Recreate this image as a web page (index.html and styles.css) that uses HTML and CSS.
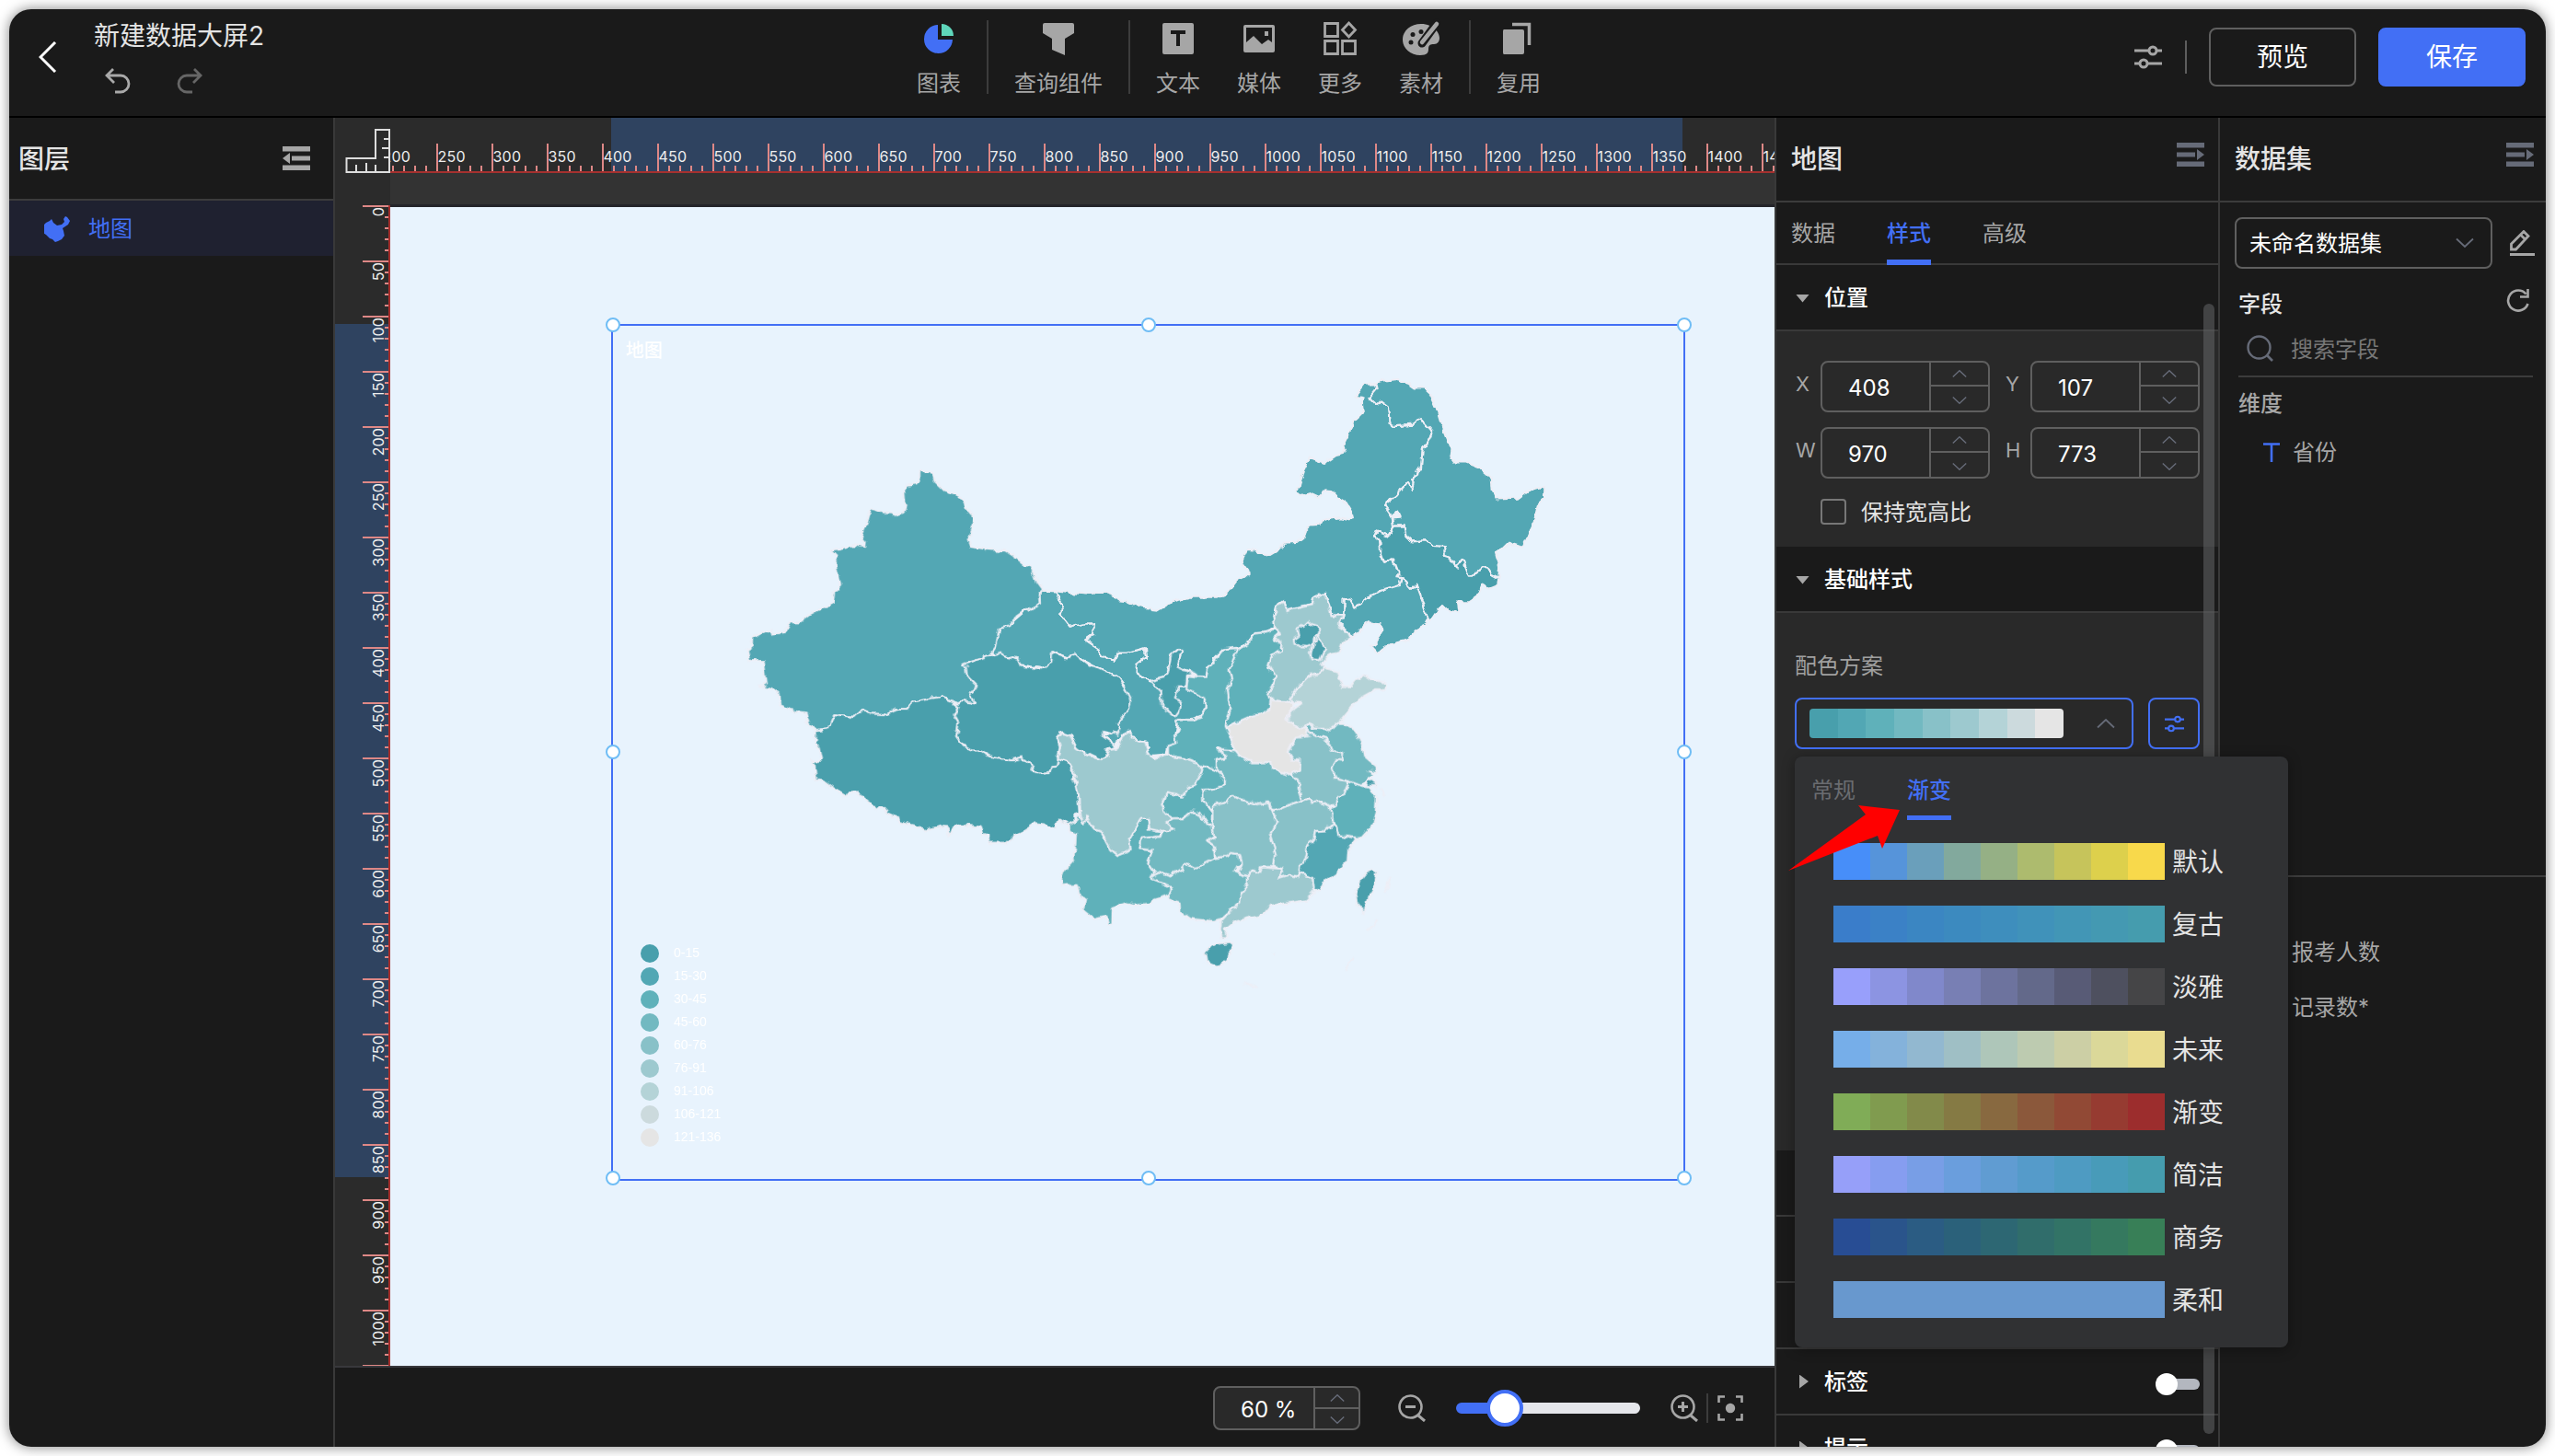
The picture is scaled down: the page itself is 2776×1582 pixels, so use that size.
FILE: index.html
```html
<!DOCTYPE html>
<html lang="zh-CN">
<head>
<meta charset="utf-8">
<title>新建数据大屏2</title>
<link rel="stylesheet" href="styles.css">
</head>
<body>
<svg class="defs" width="0" height="0">
  <symbol id="up" viewBox="0 0 20 12"><path d="M1 10.500 10 2l9 8.500" fill="none" stroke="currentColor" stroke-width="1.800"/></symbol>
  <symbol id="down" viewBox="0 0 20 12"><path d="M1 1.500 10 10l9-8.500" fill="none" stroke="currentColor" stroke-width="1.800"/></symbol>
  <symbol id="sliders" viewBox="0 0 30 26"><g fill="none" stroke="currentColor" stroke-width="3"><path d="M0 6h16M24 6h6M0 20h6M14 20h16"/><circle cx="20" cy="6" r="4"/><circle cx="10" cy="20" r="4"/></g></symbol>
  <symbol id="fold" viewBox="0 0 30 26"><path d="M0 0h30v5.500H0zM0 20.500h30V26H0zM0 10.500h20v5H0zM22 7 30 13l-8 6z" fill="currentColor"/></symbol>
</svg>
<div class="app">
  <header class="header">
    <svg class="back" width="20" height="34" viewBox="0 0 20 34"><path d="M18 1 2 17l16 16" fill="none" stroke="#fff" stroke-width="3"/></svg>
    <div class="title-col">
      <div class="doc-title">新建数据大屏2</div>
      <div class="history">
        <svg width="30" height="28" viewBox="0 0 30 28"><path d="M9 1 2 8l8 8M2 8h15a9 9 0 0 1 0 18h-6" fill="none" stroke="#a9a9a9" stroke-width="2.800"/></svg>
        <svg width="30" height="28" viewBox="0 0 30 28"><path d="m21 1 7 7-8 8M28 8H13a9 9 0 0 0 0 18h6" fill="none" stroke="#666" stroke-width="2.800"/></svg>
      </div>
    </div>
    <nav class="tools">
      <div class="tool"><svg viewBox="0 0 36 36"><path d="M17 3v16h16A15.500 15.500 0 1 1 17 3z" fill="#426ff5"/><path d="M21 2a13 13 0 0 1 13 13H21z" fill="#5fd6bb"/></svg><span>图表</span></div>
      <i class="sep"></i>
      <div class="tool"><svg viewBox="0 0 36 36"><path d="M1 3q0-2 2-2h30q2 0 2 2v9L25 18v18l-14-6V18L1 12z" fill="#a6a6a6"/></svg><span>查询组件</span></div>
      <i class="sep"></i>
      <div class="tools-group">
        <div class="tool"><svg viewBox="0 0 36 36"><path fill-rule="evenodd" d="M3 1h30q2 0 2 2v30q0 2-2 2H3q-2 0-2-2V3q0-2 2-2zm7 8v4h6v13h4V13h6V9z" fill="#a6a6a6"/></svg><span>文本</span></div>
        <div class="tool"><svg viewBox="0 0 36 36"><path fill-rule="evenodd" d="M3 3h30q2 0 2 2v26q0 2-2 2H3q-2 0-2-2V5q0-2 2-2zm1 3v16l8-7 9 9 7-5 4 3V6zm20 4h4v5h-4z" fill="#a6a6a6"/></svg><span>媒体</span></div>
        <div class="tool"><svg viewBox="0 0 36 36"><path d="M1.500 1.500h14v14h-14zM1.500 20.500h14v14h-14zM20.500 20.500h14v14h-14zM27.500 1l7 7.500-7 7.500-7-7.500z" fill="none" stroke="#a6a6a6" stroke-width="2.800"/></svg><span>更多</span></div>
        <div class="tool"><svg viewBox="0 0 36 36"><path d="M18 2C7 2-2 9-2 19s9 17 19 17c8 0 9-3 9-7s2-5 6-5c4 0 6-3 6-7 0-5-6-15-20-15z" fill="#a6a6a6"/><g fill="#1a1a1a"><circle cx="7" cy="22" r="2.500"/><circle cx="9" cy="13.500" r="2.500"/><circle cx="18" cy="10.500" r="2.500"/></g><path d="m35 1-16 22" stroke="#1a1a1a" stroke-width="9" stroke-linecap="round"/><path d="m35 2-16 20" stroke="#a6a6a6" stroke-width="4.500" stroke-linecap="round"/></svg><span>素材</span></div>
      </div>
      <i class="sep"></i>
      <div class="tool"><svg viewBox="0 0 36 36"><path d="M2 8h20q2 0 2 2v23q0 2-2 2H2q-1 0-1-2V10q0-2 1-2z" fill="#a6a6a6"/><path d="M11 2.500h18.500V25" fill="none" stroke="#a6a6a6" stroke-width="3.500"/></svg><span>复用</span></div>
    </nav>
    <div class="actions">
      <svg class="conf" width="30" height="26"><use href="#sliders"/></svg>
      <i class="asep"></i>
      <div class="btn">预览</div>
      <div class="btn primary">保存</div>
    </div>
  </header>

  <main class="main">
    <aside class="layers">
      <div class="panel-head"><b>图层</b><svg class="flip" width="30" height="26"><use href="#fold"/></svg></div>
      <div class="layer"><svg width="29" height="28" viewBox="0 0 29 28"><path d="m0 9 2-2 4-2 2-2 2 4 4 3 5-1 3-3-1-3 2-3 2 1 3 4-2 4-3 2-3 2 1 3 1 5-3 4-4 2-3 1-3-3-3-1-4-4-3-2-1-4z" fill="#426ff5"/></svg><span>地图</span></div>
    </aside>

    <section class="center">
      <div class="ruler-row">
        <div class="corner"><svg width="60" height="60" viewBox="0 0 60 60"><path d="M12.500 59V44H44V13h15v46zM23 59v-8M34 59V49M44 59v-8M60 23h-7M60 33h-9M60 43h-7" fill="none" stroke="#ddd" stroke-width="2"/></svg></div>
        <div class="ruler-x"><div class="range-x"></div><div class="cells-x"><span>200</span><span>250</span><span>300</span><span>350</span><span>400</span><span>450</span><span>500</span><span>550</span><span>600</span><span>650</span><span>700</span><span>750</span><span>800</span><span>850</span><span>900</span><span>950</span><span>1000</span><span>1050</span><span>1100</span><span>1150</span><span>1200</span><span>1250</span><span>1300</span><span>1350</span><span>1400</span><span>1450</span></div></div>
      </div>
      <div class="work">
        <div class="ruler-y"><div class="range-y"></div><div class="cells-y"><span><em>0</em></span><span><em>50</em></span><span><em>100</em></span><span><em>150</em></span><span><em>200</em></span><span><em>250</em></span><span><em>300</em></span><span><em>350</em></span><span><em>400</em></span><span><em>450</em></span><span><em>500</em></span><span><em>550</em></span><span><em>600</em></span><span><em>650</em></span><span><em>700</em></span><span><em>750</em></span><span><em>800</em></span><span><em>850</em></span><span><em>900</em></span><span><em>950</em></span><span><em>1000</em></span><span></span></div></div>
        <div class="stage">
          <svg class="map" width="1504" height="1260" viewBox="424 224 1504 1260">
            <defs><filter id="rough" x="-2%" y="-2%" width="104%" height="104%"><feTurbulence type="fractalNoise" baseFrequency=".11" numOctaves="2" seed="4"/><feDisplacementMap in="SourceGraphic" scale="7" xChannelSelector="R" yChannelSelector="G"/></filter></defs>
            <g filter="url(#rough)" class="land">
              <g transform="translate(1100 600) scale(.33333)">
                <path class="c2" d="M103 128 145 130 168 190 160 205 190 245 230 235 270 235 268 270 240 290 285 320 300 340 335 357 348 332 375 332 435 315 438 345 408 370 407 395 445 423 575 405 630 478 628 535 590 550 543 550 535 600 538 625 510 640 505 665 447 670 440 620 395 610 380 590 355 605 335 635 300 600 355 580 345 560 385 495 370 440 345 408 265 370 210 340 180 345 135 328 130 370 100 382 30 370 0 350-65 335-45 290-40 250 0 232 55 185 95 170 95 135z"/>
                <path class="c2" d="M145 130 180 134 240 139 300 134 335 145 350 160 372 163 395 174 425 183 450 184 455 192 475 194 505 176 545 158 580 149 615 148 665 149 695 137 712 125 733 97 755 87 773 72 772 65 757 45 752 30 765 2 772-6 790-5 805 3 845 12 865 0 888-28 930-30 955-50 960-72 975-86 1005-88 1010-97 1040-107 1070-110 1100-104 1113-107 1110-125 1085-165 1060-180 1045-195 1020-197 1003-177 980-188 955-182 942-180 930-190 928-202 937-205 940-220 955-265 975-305 1020-288 1055-312 1080-318 1090-335 1085-355 1100-385 1120-430 1148-455 1145-500 1120-505 1150-545 1185-545 1190-530 1165-500 1190-475 1205-492 1230-473 1235-420 1250-408 1310-412 1333-433 1350-425 1372-390 1362-365 1340-330 1335-270 1320-265 1305-200 1293-225 1255-180 1220-162 1217-148 1240-115 1245-82 1230-50 1205-60 1190-68 1183-50 1200-35 1203 0 1212 38 1247 25 1262 82 1270 87 1265 110 1245 120 1205 130 1165 152 1117 187 1105 158 1085 152 1083 210 1042 208 1035 175 1020 138 985 150 980 172 940 180 895 192 885 163 868 175 853 205 862 250 825 265 790 268 770 300 735 315 690 320 660 350 640 380 635 410 600 408 575 390 540 376 555 325 545 318 520 340 508 405 445 423 407 395 408 370 438 345 435 315 400 325 375 332 348 332 335 357 300 340 285 320 240 290 268 270 270 235 230 235 190 245 160 205 168 190z"/>
                <g transform="translate(600 -630)">
                  <path class="c2" d="M585 80 620 73 655 69 690 80 715 97 740 97 765 120 785 165 800 215 820 265 832 300 830 320 845 340 880 340 925 358 962 390 965 430 980 460 1050 458 1080 435 1138 416 1137 460 1115 480 1100 545 1065 617 1020 602 1000 622 978 632 990 680 988 717 965 705 952 685 935 685 905 710 890 710 870 655 850 680 830 650 812 645 810 615 775 612 750 595 705 598 685 580 680 547 648 548 643 520 668 518 660 502 645 515 617 480 655 450 693 405 705 430 720 365 735 360 740 300 762 265 772 240 735 198 710 218 650 222 635 210 630 157 605 138 590 155 565 130 590 100z"/>
                  <path class="c1" d="M648 548 680 547 685 580 705 598 750 595 775 612 810 615 812 645 830 650 850 680 870 655 890 710 905 710 935 685 952 685 965 705 988 717 985 740 955 752 935 740 920 775 890 795 855 797 860 830 825 825 810 810 795 815 765 860 755 850 740 795 720 740 705 750 675 715 655 712 662 700 645 655 613 668 603 640 605 600 585 578 595 565 628 578z"/>
                  <path class="c2" d="M675 715 705 750 720 740 740 795 758 850 750 868 720 885 690 920 640 932 610 950 595 963 573 940 590 925 610 890 600 865 560 862 525 900 505 908 495 888 465 865 485 840 485 782 500 785 517 815 565 780 605 758 665 740 670 722z"/>
                </g>
              </g>
              <g transform="translate(780 380) scale(.33333 .35714)">
                <path class="c2" d="M1063 735 1052 745 1055 775 1020 797 1012 788 975 812 955 843 920 850 910 905 895 925 895 932 800 960 815 968 818 998 850 1028 825 1045 842 1080 795 1072 788 1080 730 1058 635 1075 620 1095 590 1095 545 1112 500 1110 475 1098 445 1120 385 1112 362 1155 325 1160 300 1145 290 1107 250 1102 205 1085 200 1050 175 1033 140 1025 162 1018 152 950 107 950 98 915 113 910 115 880 150 862 180 855 183 867 222 862 237 830 272 830 300 810 378 773 382 738 405 715 392 670 388 628 372 613 410 605 442 597 480 602 482 588 470 575 490 525 502 487 535 500 570 500 580 507 608 495 614 480 610 430 617 414 650 410 660 392 660 374 698 373 707 400 740 430 770 440 805 457 815 487 835 510 833 550 821 580 830 602 880 610 940 614 975 635 1000 655 1018 657 1035 685 1045 712z"/>
                <path class="c1" d="M325 1160 362 1155 385 1112 445 1120 475 1098 500 1110 545 1112 590 1095 620 1095 635 1075 730 1058 788 1080 770 1080 785 1090 772 1115 787 1140 780 1178 800 1205 830 1222 860 1222 895 1240 960 1252 992 1245 1025 1270 1030 1285 1060 1290 1085 1287 1090 1272 1108 1270 1112 1248 1145 1260 1172 1300 1160 1310 1175 1335 1182 1410 1165 1415 1165 1445 1150 1452 1118 1432 1103 1463 1070 1447 1040 1443 1000 1467 970 1480 945 1503 890 1503 885 1480 868 1475 860 1455 790 1447 765 1460 752 1485 750 1455 735 1453 680 1462 640 1450 590 1440 585 1425 555 1413 548 1400 520 1398 480 1370 455 1348 430 1347 418 1360 370 1333 345 1315 325 1312 318 1270 307 1250 330 1260 342 1245 335 1215 320 1200 320 1165z"/>
                <path class="c1" d="M895 932 925 923 935 935 980 945 990 965 1060 973 1090 955 1092 922 1140 940 1170 930 1215 965 1225 963 1305 998 1332 1030 1348 1075 1340 1102 1305 1140 1315 1160 1305 1173 1260 1162 1260 1180 1290 1200 1298 1213 1272 1220 1270 1243 1250 1247 1218 1232 1210 1238 1175 1220 1152 1178 1125 1170 1110 1188 1118 1210 1112 1248 1108 1270 1090 1272 1085 1287 1060 1290 1030 1285 1025 1270 992 1245 960 1252 895 1240 860 1222 830 1222 800 1205 780 1178 787 1140 772 1115 785 1090 770 1080 788 1080 795 1072 842 1080 825 1045 850 1028 818 998 815 968 800 960z"/>
              </g>
              <g transform="translate(1100 600) scale(.33333)">
                <path class="c1" d="M445 423 508 405 520 340 545 318 555 325 540 376 600 402 572 405 570 440 543 440 533 480 552 490 550 515 533 538 490 505 488 460 460 430z"/>
                <path class="c3" d="M740 315 722 360 710 385 720 415 705 450 712 520 698 570 710 590 730 648 665 645 690 655 695 672 668 680 670 718 620 697 560 675 510 665 510 635 538 625 535 600 543 580 540 550 590 550 628 535 630 478 570 450 575 405 600 408 635 410 640 380 690 320 735 315z"/>
                <path class="c3" d="M740 315 770 300 790 268 825 265 865 255 875 268 855 285 880 300 878 325 850 340 838 372 862 410 838 465 845 485 840 520 810 535 775 540 700 572 698 570 712 520 705 450 720 415 710 385 722 360z"/>
                <path class="c3" d="M222 860 232 890 248 865 270 905 290 910 325 975 345 993 388 975 385 940 425 872 445 872 450 905 485 912 485 930 425 935 418 970 458 975 445 1015 465 1045 455 1070 520 1095 520 1115 500 1125 465 1135 450 1148 395 1155 370 1148 330 1162 328 1215 315 1213 310 1190 270 1200 235 1172 243 1135 222 1125 212 1085 165 1090 162 1065 170 1045 205 1005 210 920 190 912 187 890 205 880z"/>
                <path class="c6" d="M150 610 165 593 192 600 210 640 250 665 290 675 310 672 318 645 345 640 360 600 382 588 395 610 437 622 445 660 470 675 500 665 560 675 610 692 622 700 622 718 600 760 575 768 560 800 530 790 505 785 500 810 487 828 505 858 530 870 505 885 530 908 490 915 450 905 445 872 425 872 410 895 385 940 388 975 345 993 325 975 290 910 270 905 248 865 232 890 222 860 218 790 205 740 212 735 185 690 150 675 160 630z"/>
                <path class="c3" d="M620 697 670 718 693 740 692 765 660 775 622 782 622 810 655 850 652 890 635 890 615 855 585 848 570 860 540 878 505 858 487 828 500 810 505 785 530 790 560 800 575 768 600 760 622 718z"/>
                <path class="c4" d="M530 870 560 870 585 848 615 855 640 892 655 890 660 930 640 945 660 960 663 1000 630 1022 595 1035 567 1020 555 1035 520 1060 480 1048 458 1065 465 1045 445 1015 458 975 418 970 425 935 485 930 490 915 530 908 505 885z"/>
                <path class="c4" d="M458 1060 480 1048 520 1060 555 1035 567 1020 595 1035 663 1000 700 995 715 983 742 987 748 1015 730 1045 775 1060 770 1085 747 1115 745 1145 715 1170 680 1200 655 1205 580 1198 550 1175 548 1145 505 1130 522 1105 520 1095 455 1070z"/>
                <path class="c4" d="M665 645 730 648 750 672 785 687 845 687 853 710 910 732 940 750 935 770 947 812 895 830 855 845 840 820 800 825 720 800 700 815 657 830 655 845 622 810 622 782 660 775 692 765 693 740 670 718 668 680 695 672 690 655z"/>
                <path class="c5" d="M657 830 700 815 720 800 800 825 840 818 850 848 865 885 843 925 855 960 862 990 855 1028 815 1030 810 1048 785 1040 770 1060 735 1045 748 1015 742 987 715 983 700 995 665 998 660 960 640 945 660 930 655 890 655 850z"/>
                <path class="c6" d="M853 205 868 175 885 163 895 192 940 180 980 172 985 150 1020 138 1035 175 1042 208 1083 210 1065 240 1095 260 1105 280 1080 300 1070 330 1045 335 1020 350 1010 370 1018 380 1000 400 970 405 935 440 912 478 915 492 845 485 838 465 862 410 838 372 850 340 878 325 880 300 855 285 875 268 858 250z"/>
                <path class="c1" d="M968 228 980 240 998 245 1000 270 985 285 985 300 965 308 922 305 920 285 935 275 930 255 950 245z"/>
                <path class="c1" d="M1000 275 1010 290 1020 320 1005 355 980 352 975 335 985 300 995 290z"/>
                <path class="c7" d="M1018 380 1070 392 1065 420 1080 440 1105 440 1125 415 1145 405 1170 415 1220 430 1215 450 1185 450 1140 475 1120 495 1080 545 1065 560 1045 580 985 578 970 560 955 575 930 572 895 545 920 515 945 495 915 492 912 478 935 440 970 405 1000 400z"/>
                <path class="c9" d="M845 485 915 492 920 510 895 545 930 572 960 575 970 600 930 605 910 630 900 655 915 680 940 682 938 712 910 732 853 710 845 687 785 687 750 672 730 648 718 610 700 575 775 540 810 535 840 520z"/>
                <path class="c4" d="M1080 560 1120 585 1140 620 1150 670 1190 705 1190 720 1165 715 1180 730 1160 745 1140 765 1100 750 1060 740 1045 705 1060 680 1035 645 1030 615 990 600 970 585 955 575 970 560 985 578 1045 580 1065 560z"/>
                <path class="c5" d="M955 575 990 600 1030 615 1040 650 1078 660 1075 682 1060 680 1045 705 1060 740 1100 750 1085 790 1065 805 1060 825 1035 830 1005 815 980 820 970 805 947 812 935 770 940 750 910 732 938 712 940 682 915 680 900 655 930 605 970 600z"/>
                <path class="c3" d="M1100 750 1140 765 1160 765 1175 785 1193 805 1190 850 1180 890 1140 935 1090 930 1065 925 1058 895 1048 885 1045 860 1030 845 1060 825 1065 800 1085 790z"/>
                <path class="c1" d="M1165 735 1190 755 1185 765 1155 765z"/>
                <path class="c5" d="M850 848 895 830 947 812 970 805 980 820 1005 815 1035 830 1045 860 1045 890 1025 910 990 912 985 940 965 965 960 1000 945 1020 938 1060 905 1055 870 1065 885 1035 855 1028 862 990 843 925 865 885z"/>
                <path class="c2" d="M1048 890 1058 895 1065 925 1125 935 1098 970 1095 1010 1060 1050 1025 1075 1000 1108 985 1095 980 1065 938 1050 945 1020 960 1000 965 965 985 940 990 912 1025 910z"/>
                <path class="c6" d="M770 1060 785 1040 810 1048 815 1030 885 1035 870 1065 905 1055 935 1062 940 1050 980 1065 988 1108 960 1138 880 1150 845 1155 825 1180 720 1210 695 1230 705 1258 685 1258 680 1235 683 1205 715 1170 745 1145 747 1115 770 1085z"/>
                <path class="c1" d="M630 1310 655 1285 680 1278 715 1273 727 1283 710 1310 705 1330 670 1355 635 1340z"/>
                <path class="c1" d="M1175 1037 1192 1045 1185 1090 1165 1130 1147 1183 1143 1165 1125 1145 1120 1115 1135 1075 1155 1050z"/>
                <path class="isles" d="M1230 1065 1220 1115M1192 1200 1162 1240M1113 1320 1090 1368M1205 770l12 30M850 1310l6 3M760 1410l40 12"/>
              </g>
            </g>
          </svg>
          <div class="widget">
            <span class="w-title">地图</span>
            <ul class="legend">
              <li><i class="b1"></i>0-15</li><li><i class="b2"></i>15-30</li><li><i class="b3"></i>30-45</li><li><i class="b4"></i>45-60</li><li><i class="b5"></i>60-76</li><li><i class="b6"></i>76-91</li><li><i class="b7"></i>91-106</li><li><i class="b8"></i>106-121</li><li><i class="b9"></i>121-136</li>
            </ul>
            <i class="h t l"></i><i class="h t m"></i><i class="h t r"></i><i class="h c l"></i><i class="h c r"></i><i class="h b l"></i><i class="h b m"></i><i class="h b r"></i>
          </div>
        </div>
      </div>
      <footer class="footer">
        <div class="num zoom"><span>60 %</span><div class="spin"><svg width="16" height="10"><use href="#up"/></svg><svg width="16" height="10"><use href="#down"/></svg></div></div>
        <svg class="zi out" width="30" height="30" viewBox="0 0 30 30"><path d="M22 23l7 6M8 13.500h11" stroke="#a6a6a6" stroke-width="3"/><circle cx="13.500" cy="13.500" r="12" fill="none" stroke="#a6a6a6" stroke-width="2.600"/></svg>
        <div class="slider"><i></i></div>
        <svg class="zi" width="30" height="30" viewBox="0 0 30 30"><path d="M22 23l7 6M8 13.500h11M13.500 8v11" stroke="#a6a6a6" stroke-width="3"/><circle cx="13.500" cy="13.500" r="12" fill="none" stroke="#a6a6a6" stroke-width="2.600"/></svg>
        <i class="fsep"></i>
        <svg width="28" height="28" viewBox="0 0 28 28"><path d="M1.500 8V1.500H8M20 1.500h6.500V8M26.500 20v6.500H20M8 26.500H1.500V20" fill="none" stroke="#a6a6a6" stroke-width="2.600"/><circle cx="14" cy="14" r="5.200" fill="#a6a6a6"/></svg>
      </footer>
    </section>

    <aside class="props">
      <div class="panel-head tall"><b>地图</b><svg class="dim" width="30" height="26"><use href="#fold"/></svg></div>
      <div class="tabs"><span>数据</span><span class="on">样式</span><span>高级</span></div>
      <div class="sec"><i class="tri"></i><b>位置</b></div>
      <div class="body pos">
        <div class="line">
          <label>X</label><div class="num"><span>408</span><div class="spin"><svg width="16" height="10"><use href="#up"/></svg><svg width="16" height="10"><use href="#down"/></svg></div></div>
          <label>Y</label><div class="num"><span>107</span><div class="spin"><svg width="16" height="10"><use href="#up"/></svg><svg width="16" height="10"><use href="#down"/></svg></div></div>
        </div>
        <div class="line">
          <label>W</label><div class="num"><span>970</span><div class="spin"><svg width="16" height="10"><use href="#up"/></svg><svg width="16" height="10"><use href="#down"/></svg></div></div>
          <label>H</label><div class="num"><span>773</span><div class="spin"><svg width="16" height="10"><use href="#up"/></svg><svg width="16" height="10"><use href="#down"/></svg></div></div>
        </div>
        <div class="check"><i></i><span>保持宽高比</span></div>
      </div>
      <div class="sec"><i class="tri"></i><b>基础样式</b></div>
      <div class="body base">
        <div class="lbl">配色方案</div>
        <div class="pick">
          <div class="scheme"><div class="swatch"><i class="b1"></i><i class="b2"></i><i class="b3"></i><i class="b4"></i><i class="b5"></i><i class="b6"></i><i class="b7"></i><i class="b8"></i><i class="b9"></i></div><svg width="22" height="12"><use href="#up"/></svg></div>
          <div class="cfg"><svg width="21" height="19"><use href="#sliders"/></svg></div>
        </div>
      </div>
      <div class="sec"></div>
      <div class="sec"></div>
      <div class="sec"></div>
      <div class="sec"><i class="tri side"></i><b>标签</b><i class="toggle"></i></div>
      <div class="sec"><i class="tri side"></i><b>提示</b><i class="toggle"></i></div>
      <div class="bar"></div>
      <div class="pop">
        <div class="ptabs"><span>常规</span><span class="on">渐变</span></div>
        <div class="rows">
          <div class="row"><div class="grad"><i style="background:#478ef9"></i><i style="background:#5694da"></i><i style="background:#6a9fbb"></i><i style="background:#82a99d"></i><i style="background:#95b085"></i><i style="background:#adbb6e"></i><i style="background:#c6c45b"></i><i style="background:#ddd04c"></i><i style="background:#f8d94b"></i></div><span>默认</span></div>
          <div class="row"><div class="grad"><i style="background:#3a7dca"></i><i style="background:#3b81c6"></i><i style="background:#3b86c2"></i><i style="background:#3c8abf"></i><i style="background:#3e8ebd"></i><i style="background:#4092ba"></i><i style="background:#4296b6"></i><i style="background:#4499b2"></i><i style="background:#459cae"></i></div><span>复古</span></div>
          <div class="row"><div class="grad"><i style="background:#989ffb"></i><i style="background:#8c94e2"></i><i style="background:#8088cb"></i><i style="background:#787fb4"></i><i style="background:#6d739e"></i><i style="background:#63698a"></i><i style="background:#585b76"></i><i style="background:#4e505f"></i><i style="background:#454547"></i></div><span>淡雅</span></div>
          <div class="row"><div class="grad"><i style="background:#76aee9"></i><i style="background:#84b2db"></i><i style="background:#92b8d0"></i><i style="background:#9fbfc5"></i><i style="background:#aec6b9"></i><i style="background:#bdcbb0"></i><i style="background:#cccfa5"></i><i style="background:#dbd899"></i><i style="background:#e9dc90"></i></div><span>未来</span></div>
          <div class="row"><div class="grad"><i style="background:#80ac57"></i><i style="background:#809b4f"></i><i style="background:#828a4a"></i><i style="background:#857a44"></i><i style="background:#886940"></i><i style="background:#8b583b"></i><i style="background:#914935"></i><i style="background:#963b31"></i><i style="background:#9c2d2d"></i></div><span>渐变</span></div>
          <div class="row"><div class="grad"><i style="background:#969ff9"></i><i style="background:#869df0"></i><i style="background:#789ee6"></i><i style="background:#6a9edd"></i><i style="background:#609cd2"></i><i style="background:#559bca"></i><i style="background:#4e9bc2"></i><i style="background:#489bb9"></i><i style="background:#459cae"></i></div><span>简洁</span></div>
          <div class="row"><div class="grad"><i style="background:#284d94"></i><i style="background:#2a548b"></i><i style="background:#2b5c83"></i><i style="background:#2b617a"></i><i style="background:#2d6773"></i><i style="background:#306d6b"></i><i style="background:#327366"></i><i style="background:#35795f"></i><i style="background:#387f57"></i></div><span>商务</span></div>
          <div class="row"><div class="grad"><i style="background:#6898ce"></i></div><span>柔和</span></div>
        </div>
        <svg class="arrow" width="122" height="72" viewBox="1945 875 122 72"><path d="M1945 946 2029 885 2021 875 2066 880 2047 922 2042 908z" fill="#f00"/></svg>
      </div>
    </aside>

    <aside class="data">
      <div class="panel-head tall"><b>数据集</b><svg class="dim" width="30" height="26"><use href="#fold"/></svg></div>
      <div class="pickset">
        <div class="select"><span>未命名数据集</span><svg width="22" height="12"><use href="#down"/></svg></div>
        <svg width="28" height="28" viewBox="0 0 28 28"><path d="M1 26.500h27" stroke="#a6a6a6" stroke-width="3"/><path d="M2.500 21v-6L16 1.500l5 5L7.500 21zM12.500 5l5 5" fill="none" stroke="#a6a6a6" stroke-width="2.800"/></svg>
      </div>
      <div class="fields"><b>字段</b><svg width="26" height="26" viewBox="0 0 26 26"><path d="M21.500 5.500A11 11 0 1 0 23.500 16M23.500 0v8.500H15" fill="none" stroke="#a6a6a6" stroke-width="2.600"/></svg></div>
      <div class="search"><svg width="30" height="30" viewBox="0 0 30 30"><circle cx="13.500" cy="13.500" r="12" fill="none" stroke="#666b78" stroke-width="2.400"/><path d="m22 22 6 6" stroke="#666b78" stroke-width="2.600"/></svg><span>搜索字段</span></div>
      <div class="dim-title">维度</div>
      <div class="field"><svg width="18" height="21" viewBox="0 0 18 21"><path d="M0 1.500h18M9 1.500V21" stroke="#426ff5" stroke-width="2.600"/></svg><span>省份</span></div>
      <div class="measures"><div>报考人数</div><div>记录数*</div></div>
    </aside>
  </main>
</div>
</body>
</html>
```
FILE: styles.css
```css
* { box-sizing: border-box; }
html, body { margin: 0; height: 100%; overflow: hidden; }
body { background: #fff; padding: 10px; font: 24px/32px Inter, "Noto Sans CJK SC", sans-serif; color: #e4e4e4; }
i, em { font-style: normal; display: block; }
b { font-weight: 500; }
svg { display: block; flex: none; }
.defs { position: absolute; }
.app { width: 2756px; height: 1562px; background: #1a1a1a; border-radius: 24px; overflow: hidden; display: flex; flex-direction: column; box-shadow: 0 0 14px rgba(0,0,0,.5); }

.header { height: 118px; flex: none; border-bottom: 2px solid #000; display: flex; align-items: flex-start; }
.back { margin: 35px 0 0 32px; flex: none; }
.title-col { width: 894px; flex: none; padding: 11px 0 0 40px; }
.doc-title { font-size: 28px; line-height: 36px; }
.history { display: flex; gap: 46px; margin: 17px 0 0 12px; }
.tools { display: flex; align-items: flex-start; margin-left: 40px; padding-top: 12px; color: #a6a6a6; }
.tools-group { display: flex; gap: 40px; }
.tool { display: flex; flex-direction: column; align-items: center; gap: 15px; padding-top: 2px; }
.tool svg { width: 36px; height: 36px; overflow: visible; }
.sep { width: 2px; height: 80px; background: #3c3c3c; margin: 0 28px; }
.actions { margin-left: auto; padding: 20px 22px 0 0; display: flex; align-items: center; }
.conf { color: #a6a6a6; }
.asep { width: 2px; height: 36px; background: #5e5e5e; margin: 0 24px 0 25px; }
.btn { width: 160px; height: 64px; border: 2px solid #5f5f5f; border-radius: 8px; font-size: 28px; line-height: 60px; text-align: center; color: #fff; margin-right: 24px; }
.btn.primary { background: #426ff5; border-color: #426ff5; margin-right: 0; }

.main { flex: 1; display: flex; min-height: 0; }
.panel-head { height: 90px; border-bottom: 2px solid #3c3c3c; display: flex; justify-content: space-between; padding: 0 25px 0 10px; font-size: 28px; line-height: 90px; }
.panel-head svg { margin-top: 31px; color: #a6a6a6; }
.panel-head.tall { height: 92px; padding: 0 15px 0 16px; }
.data .panel-head.tall { padding-right: 13px; }
.panel-head.tall svg { margin-top: 27px; }
.panel-head svg.dim { color: #666b78; }
.flip { transform: scaleX(-1); }
.layers { width: 354px; border-right: 2px solid #393939; flex: none; }
.layer { height: 60px; background: #1f2130; display: flex; align-items: center; padding: 2px 0 0 38px; gap: 19px; color: #426ff5; }

.center { width: 1564px; flex: none; display: flex; flex-direction: column; min-width: 0; }
.ruler-row { height: 60px; display: flex; background: #2b2b2b; flex: none; }
.corner { width: 60px; flex: none; }
.ruler-x { flex: 1; position: relative; overflow: hidden; border-bottom: 2px solid #a5312f; }
.range-x { position: absolute; left: 240px; top: 0; width: 1164px; height: 60px; background: #2f4360; }
.cells-x { position: relative; display: flex; width: 1570px; height: 58px; margin-left: -10px; }
.cells-x span { width: 60px; flex: none; font-size: 16px; line-height: 20px; padding: 32px 0 0 1.500px; letter-spacing: .2px; color: #eee;
  background: linear-gradient(#de8886,#de8886) 0 28px/2px 30px no-repeat, repeating-linear-gradient(90deg, #de8886 0 2px, transparent 2px 12px) 0 52px/60px 6px no-repeat; }
.work { flex: 1; display: flex; min-height: 0; }
.ruler-y { width: 60px; flex: none; position: relative; overflow: hidden; background: #2b2b2b; padding-top: 35px; }
.range-y { position: absolute; left: 0; top: 164px; width: 60px; height: 927px; background: #2f4360; }
.cells-y { position: relative; border-right: 2px solid #a5312f; }
.cells-y span { display: flex; justify-content: flex-end; height: 60px; padding: 2px 1px 0 0;
  background: linear-gradient(#de8886,#de8886) right top/28px 2px no-repeat, repeating-linear-gradient(#de8886 0 2px, transparent 2px 12px) right top/4px 60px no-repeat; }
.cells-y em { writing-mode: vertical-rl; transform: rotate(180deg); font-size: 16px; line-height: 20px; height: max-content; letter-spacing: .2px; color: #eee; }
.stage { flex: 1; position: relative; background: #e8f3fd; border-top: 34px solid #333; overflow: hidden; box-shadow: inset 0 3px #242429; }
.map { position: absolute; left: -1px; top: 1px; }
.land path { stroke: #edeef6; stroke-width: 2.100px; vector-effect: non-scaling-stroke; stroke-linejoin: round; }
.c1 { fill: #489fac; } .c2 { fill: #52a7b4; } .c3 { fill: #5fb1ba; } .c4 { fill: #72b9c1; } .c5 { fill: #88c1c8; }
.c6 { fill: #9dc9cf; } .c7 { fill: #b4d3d7; } .c9 { fill: #e5e5e5; } .isles { fill: none; }
.b1 { background: #489fac; } .b2 { background: #52a7b4; } .b3 { background: #5fb1ba; } .b4 { background: #72b9c1; } .b5 { background: #88c1c8; }
.b6 { background: #9dc9cf; } .b7 { background: #b4d3d7; } .b8 { background: #ccdadd; } .b9 { background: #e5e5e5; }
.widget { position: absolute; left: 240px; top: 130px; width: 1167px; height: 931px; border: 2px solid #426ff5; display: flex; flex-direction: column; justify-content: space-between; padding: 13px 30px 33px; }
.w-title { font-size: 20px; line-height: 28px; color: #fff; margin-left: -16px; font-weight: 500; }
.legend { list-style: none; margin: 0; padding: 0; font: 14px/25px "Liberation Sans", sans-serif; color: #fff; }
.legend li { display: flex; align-items: center; gap: 16px; }
.legend i { width: 20px; height: 20px; border-radius: 50%; }
.h { position: absolute; width: 16px; height: 16px; border-radius: 50%; background: #fff; border: 2px solid #6fbdf5; }
.h.t { top: -9px; } .h.c { top: 455px; } .h.b { bottom: -7px; }
.h.l { left: -8px; } .h.m { left: 574px; } .h.r { right: -9px; }

.footer { height: 88px; flex: none; border-top: 2px solid #38383c; display: flex; align-items: center; padding: 2px 34px 0 954px; }
.num { width: 184px; height: 56px; border: 2px solid #5f5f5f; border-radius: 8px; display: flex; color: #fff; }
.num span { flex: 1; padding-left: 28px; line-height: 56px; }
.spin { width: 64px; border-left: 2px solid #5f5f5f; display: flex; flex-direction: column; align-items: center; gap: 19px; padding-top: 7px; color: #666b78;
  background: linear-gradient(#5f5f5f,#5f5f5f) 0 24px/100% 2px no-repeat; }
.zoom { width: 160px; height: 48px; background-color: #292929; }
.zoom span { line-height: 48px; white-space: nowrap; }
.zoom .spin { width: 49px; gap: 14px; padding-top: 6px; background-position: 0 21px; }
.out { margin: 0 33px 0 41px; }
.slider { width: 200px; height: 12px; border-radius: 6px; background: linear-gradient(90deg, #426ff5 52px, #e5e6eb 0); margin-right: 33px; }
.slider i { width: 40px; height: 40px; border-radius: 50%; background: #fff; border: 4px solid #426ff5; margin: -14px 0 0 33px; }
.slider { display: flow-root; overflow: visible; }
.fsep { width: 2px; height: 32px; background: #3c3c3c; margin: 0 10px 0 9px; }

.props { width: 484px; flex: none; border: 2px solid #393939; border-width: 0 2px; position: relative; }
.tabs { height: 68px; border-bottom: 2px solid #393939; display: flex; gap: 56px; padding-left: 16px; line-height: 68px; color: #a6a6a6; }
.on { color: #426ff5; font-weight: 500; }
.tabs .on { height: 68px; border-bottom: 6px solid #426ff5; }
.sec { height: 72px; border-bottom: 2px solid #393939; display: flex; align-items: center; padding: 0 20px 0 21px; color: #fff; }
.sec b { margin-left: 16px; padding-top: 2px; }
.tri { width: 15px; height: 9px; background: #a6a6a6; clip-path: polygon(0 0, 100% 0, 50% 100%); margin-top: 2px; }
.tri.side { width: 10px; height: 15px; margin: 0 1px 0 4px; clip-path: polygon(0 0, 100% 50%, 0 100%); }
.toggle { margin: 6px 0 0 auto; width: 36px; height: 12px; border-radius: 6px; background: #b3b7bf; position: relative; }
.toggle::before { content: ""; position: absolute; left: -12px; top: -6px; width: 24px; height: 24px; border-radius: 50%; background: #fff; }
.body { background: #292929; }
.pos { height: 234px; padding: 32px 18px 0 21px; }
.line { display: flex; margin-bottom: 16px; }
.line label { width: 27px; line-height: 50px; color: #a6a6a6; font-size: 22px; }
.line .num + label { margin-left: 17px; }
.check { display: flex; align-items: center; gap: 16px; margin: 20px 0 0 27px; height: 32px; }
.check span { padding-top: 2px; }
.check i { width: 28px; height: 28px; border: 2px solid #777; border-radius: 4px; }
.base { height: 584px; padding: 42px 18px 0 20px; }
.lbl { color: #a0a0a0; margin-bottom: 18px; }
.pick { display: flex; gap: 16px; }
.scheme { width: 368px; height: 56px; border: 2px solid #426ff5; border-radius: 8px; display: flex; align-items: center; justify-content: space-between; padding: 0 17px 0 14px; color: #666b78; }
.swatch { display: flex; width: 276px; height: 32px; border-radius: 4px; overflow: hidden; }
.swatch i, .grad i { flex: 1; }
.cfg { width: 56px; height: 56px; border: 2px solid #426ff5; border-radius: 8px; color: #426ff5; display: flex; align-items: center; justify-content: center; }
.bar { position: absolute; right: 4px; top: 202px; width: 12px; height: 1228px; border-radius: 6px; background: rgba(96,98,100,.58); }
.pop { position: absolute; left: 20px; top: 694px; width: 536px; height: 642px; border-radius: 8px; background: #303133; box-shadow: 0 2px 14px rgba(0,0,0,.35); z-index: 2; }
.ptabs { display: flex; gap: 56px; padding-left: 18px; height: 69px; line-height: 73px; color: #6a6c70; }
.ptabs .on { border-bottom: 5px solid #426ff5; }
.rows { padding: 25px 0 0 42px; display: flex; flex-direction: column; gap: 28px; }
.row { display: flex; align-items: center; gap: 8px; height: 40px; font-size: 28px; color: #e4e4e4; }
.row span { padding-top: 2px; }
.grad { display: flex; width: 360px; height: 40px; }
.arrow { position: absolute; left: -7px; top: 53px; }

.data { flex: 1; min-width: 0; }
.pickset { display: flex; align-items: center; justify-content: space-between; padding: 16px 12px 0 16px; }
.select { width: 280px; height: 56px; border: 2px solid #5f5f5f; border-radius: 8px; display: flex; align-items: center; justify-content: space-between; padding: 0 17px 0 14px; color: #666b78; }
.select span { color: #fff; padding-top: 2px; }
.fields { display: flex; justify-content: space-between; padding: 23px 17px 0 20px; height: 60px; }
.fields svg { margin-top: -1px; }
.search { margin: 0 14px 0 20px; height: 58px; border-bottom: 2px solid #3c3c3c; display: flex; align-items: center; gap: 18px; padding: 0 0 2px 9px; color: #777; }
.search span { padding-top: 2px; }
.dim-title { margin: 13px 0 0 20px; color: #a6a6a6; font-weight: 500; }
.field { display: flex; align-items: center; gap: 14px; margin: 19px 0 0 47px; color: #a6a6a6; }
.field span { padding-top: 2px; }
.measures { margin-top: 443px; border-top: 2px solid #3c3c3c; padding: 66px 0 0 78px; color: #a6a6a6; display: flex; flex-direction: column; gap: 28px; }
```
